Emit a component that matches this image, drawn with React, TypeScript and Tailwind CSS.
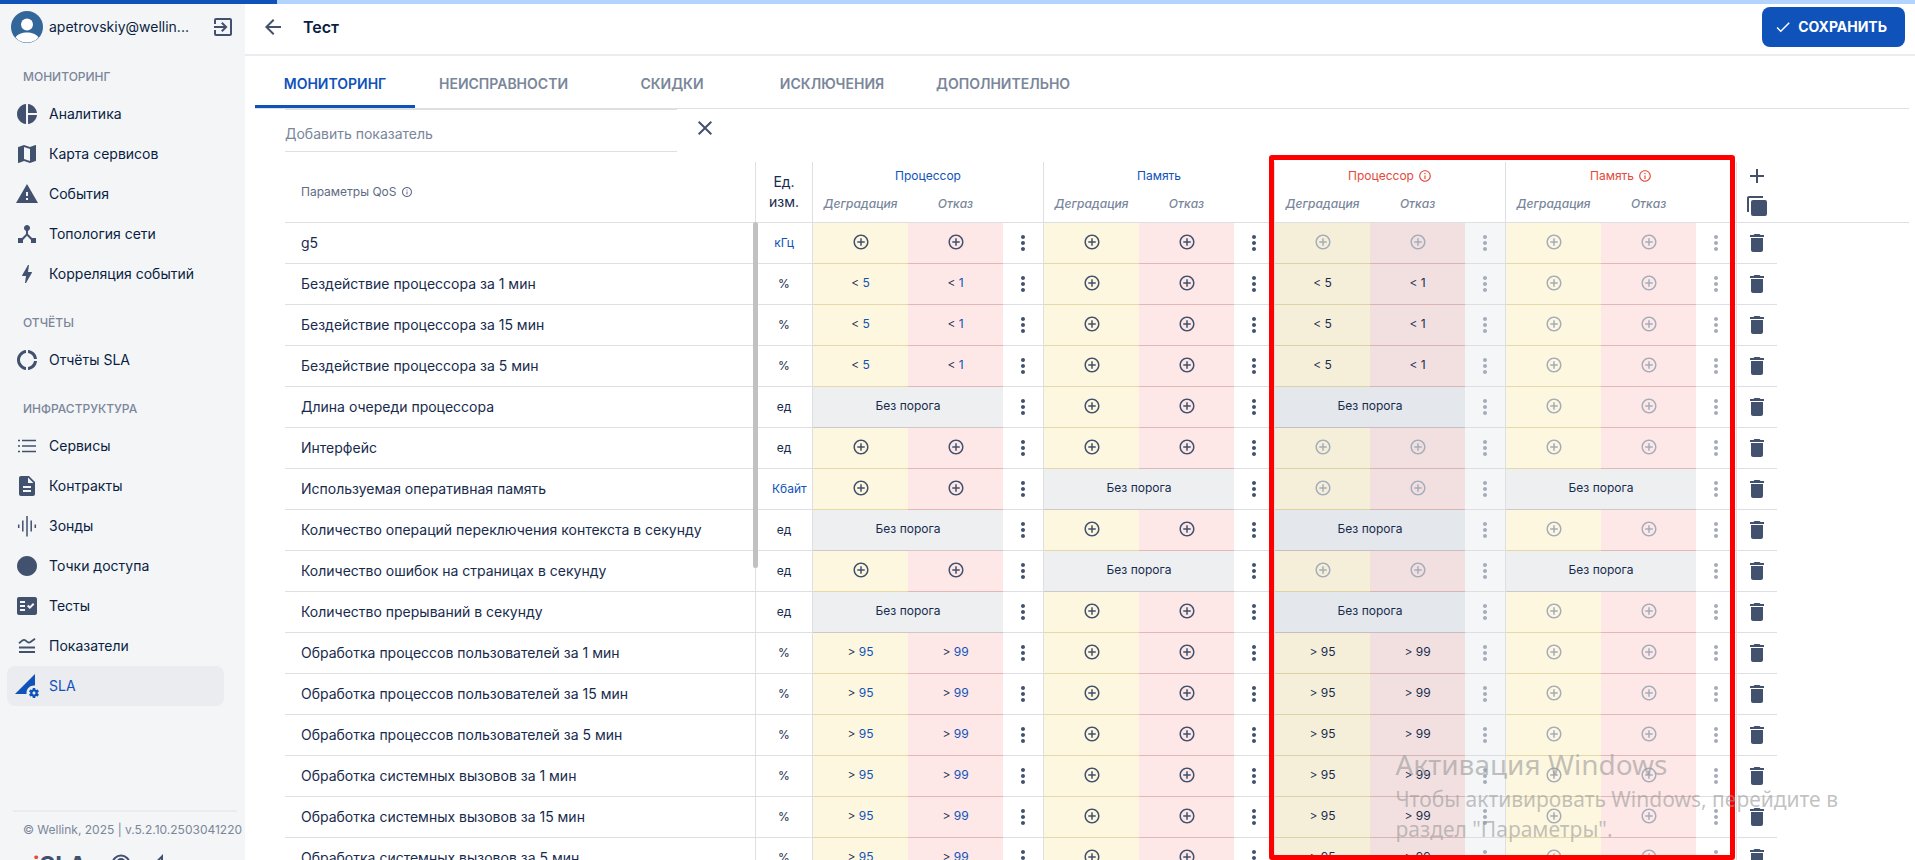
import React, { useState } from 'react'
import {
  MdAdd,
  MdAddCircleOutline,
  MdArrowBack,
  MdBolt,
  MdCheck,
  MdCircle,
  MdClose,
  MdDelete,
  MdDescription,
  MdDeviceHub,
  MdDonutLarge,
  MdExitToApp,
  MdFactCheck,
  MdInfoOutline,
  MdMap,
  MdMoreVert,
  MdPermDataSetting,
  MdPieChart,
  MdWarning,
} from 'react-icons/md'

interface IconProps {
  className?: string
}

const ListIcon: React.FC<IconProps> = ({ className }) => (
  <svg viewBox="0 0 24 24" fill="none" stroke="currentColor" strokeWidth="1.4" className={className}>
    <path d="M3 6.5h2M7 6.5h14M3 12h2M7 12h14M3 17.5h2M7 17.5h14" />
  </svg>
)

const ProbeIcon: React.FC<IconProps> = ({ className }) => (
  <svg viewBox="0 0 24 24" fill="none" stroke="currentColor" strokeWidth="1.5" className={className}>
    <path d="M3.7 10.5v3.5M7.8 6.5v11M12 2v20.5M16.2 6.5v11M20.3 10.5v3.5" />
  </svg>
)

const MetricsIcon: React.FC<IconProps> = ({ className }) => (
  <svg viewBox="0 0 24 24" fill="none" stroke="currentColor" strokeWidth="1.8" className={className}>
    <path d="M4 9.3l3.500-2.900q1.500-1.100 3 0l2 1.700q1.500 1.100 3 0L20 4.700M4 13.500h16M4 18h16" />
  </svg>
)

const CopyIcon: React.FC<IconProps> = ({ className }) => (
  <svg viewBox="0 0 24 24" fill="currentColor" className={className}>
    <path d="M4 18H2V4c0-1.1.9-2 2-2h14v2H4z" />
    <rect x="6" y="6" width="16" height="16" rx="2" />
  </svg>
)

const Avatar: React.FC<IconProps> = ({ className }) => (
  <svg viewBox="0 0 32 32" className={className}>
    <circle cx="16" cy="16" r="16" fill="#336699" />
    <circle cx="16" cy="13.500" r="6" fill="#fff" />
    <path d="M4.5 26.500C6.500 23.200 11 21.500 16 21.500s9.500 1.700 11.500 5A15.500 15.500 0 0 1 16 31.500a15.500 15.500 0 0 1-11.500-5z" fill="#fff" />
  </svg>
)

const MENU = [
  {
    title: 'МОНИТОРИНГ',
    items: [
      { icon: MdPieChart, label: 'Аналитика' },
      { icon: MdMap, label: 'Карта сервисов' },
      { icon: MdWarning, label: 'События' },
      { icon: MdDeviceHub, label: 'Топология сети' },
      { icon: MdBolt, label: 'Корреляция событий' },
    ],
  },
  {
    title: 'ОТЧЁТЫ',
    items: [{ icon: MdDonutLarge, label: 'Отчёты SLA' }],
  },
  {
    title: 'ИНФРАСТРУКТУРА',
    items: [
      { icon: ListIcon, label: 'Сервисы' },
      { icon: MdDescription, label: 'Контракты' },
      { icon: ProbeIcon, label: 'Зонды' },
      { icon: MdCircle, label: 'Точки доступа' },
      { icon: MdFactCheck, label: 'Тесты' },
      { icon: MetricsIcon, label: 'Показатели' },
      { icon: MdPermDataSetting, label: 'SLA' },
    ],
  },
]

const TABS = ['МОНИТОРИНГ', 'НЕИСПРАВНОСТИ', 'СКИДКИ', 'ИСКЛЮЧЕНИЯ', 'ДОПОЛНИТЕЛЬНО']

// null — порог не задан, 'none' — без порога
type Threshold = null | 'none' | [string, string]

interface Row {
  name: string
  unit: string
  cpu: Threshold
  memory: Threshold
}

const ROWS: Row[] = [
  { name: 'g5', unit: 'кГц', cpu: null, memory: null },
  { name: 'Бездействие процессора за 1 мин', unit: '%', cpu: ['< 5', '< 1'], memory: null },
  { name: 'Бездействие процессора за 15 мин', unit: '%', cpu: ['< 5', '< 1'], memory: null },
  { name: 'Бездействие процессора за 5 мин', unit: '%', cpu: ['< 5', '< 1'], memory: null },
  { name: 'Длина очереди процессора', unit: 'ед', cpu: 'none', memory: null },
  { name: 'Интерфейс', unit: 'ед', cpu: null, memory: null },
  { name: 'Используемая оперативная память', unit: 'Кбайт', cpu: null, memory: 'none' },
  { name: 'Количество операций переключения контекста в секунду', unit: 'ед', cpu: 'none', memory: null },
  { name: 'Количество ошибок на страницах в секунду', unit: 'ед', cpu: null, memory: 'none' },
  { name: 'Количество прерываний в секунду', unit: 'ед', cpu: 'none', memory: null },
  { name: 'Обработка процессов пользователей за 1 мин', unit: '%', cpu: ['> 95', '> 99'], memory: null },
  { name: 'Обработка процессов пользователей за 15 мин', unit: '%', cpu: ['> 95', '> 99'], memory: null },
  { name: 'Обработка процессов пользователей за 5 мин', unit: '%', cpu: ['> 95', '> 99'], memory: null },
  { name: 'Обработка системных вызовов за 1 мин', unit: '%', cpu: ['> 95', '> 99'], memory: null },
  { name: 'Обработка системных вызовов за 15 мин', unit: '%', cpu: ['> 95', '> 99'], memory: null },
  { name: 'Обработка системных вызовов за 5 мин', unit: '%', cpu: ['> 95', '> 99'], memory: null },
]

const GROUPS: { title: string; field: 'cpu' | 'memory'; locked: boolean; shaded: boolean }[] = [
  { title: 'Процессор', field: 'cpu', locked: false, shaded: false },
  { title: 'Память', field: 'memory', locked: false, shaded: false },
  { title: 'Процессор', field: 'cpu', locked: true, shaded: true },
  { title: 'Память', field: 'memory', locked: true, shaded: false },
]

const Sidebar: React.FC = () => (
  <aside className="flex w-[245px] shrink-0 flex-col bg-[#f4f5f7] pt-1">
    <div className="flex h-11 shrink-0 items-center pt-0.5 pl-[11px]">
      <Avatar className="h-8 w-8" />
      <span className="ml-1.5 w-[142px] truncate text-sm text-[#091e42]">apetrovskiy@wellin...</span>
      <button aria-label="Выйти" className="ml-5 cursor-pointer text-[#42526e]">
        <MdExitToApp className="h-6 w-6" />
      </button>
    </div>
    <nav>
      {MENU.map(section => (
        <div key={section.title}>
          <h3 className="flex h-[46px] items-center pt-3 pl-[23px] text-xs font-medium text-[#7a869a]">{section.title}</h3>
          {section.items.map(item => (
            <a
              key={item.label}
              href="#"
              className={`mr-[21px] ml-[7px] flex h-10 items-center gap-2.5 rounded-lg pl-2 text-sm ${
                item.label === 'SLA' ? 'bg-[#ebecf0] text-[#0f52ba]' : 'text-[#091e42]'
              }`}
            >
              <item.icon className={`h-6 w-6 ${item.label === 'SLA' ? '' : 'text-[#42526e]'}`} />
              {item.label}
            </a>
          ))}
        </div>
      ))}
    </nav>
    <footer className="mt-auto h-[50px] shrink-0 overflow-hidden">
      <div className="mr-2 ml-[13px] border-t-2 border-[#ebecf0] pt-2.5 pl-2.5">
        <p className="text-xs whitespace-nowrap text-[#7a869a]">© Wellink, 2025 | v.5.2.10.2503041220</p>
        <div className="mt-4 flex items-start gap-6 pl-2.5">
          <span className="text-2xl/6 font-bold text-[#42526e]">
            <span className="text-[#e5493a]">i</span>SLA
          </span>
          <svg viewBox="0 0 20 20" fill="none" stroke="currentColor" strokeWidth="2" className="h-5 w-5 text-[#42526e]">
            <circle cx="10" cy="10" r="8.500" />
            <circle cx="10" cy="8.500" r="3.500" />
          </svg>
          <svg viewBox="0 0 20 20" fill="none" stroke="currentColor" strokeWidth="2" className="h-5 w-5 text-[#42526e]">
            <path d="M7 2.500v15L2 13V7.500z" />
          </svg>
        </div>
      </div>
    </footer>
  </aside>
)

interface CellsProps {
  value: Threshold
  locked: boolean
  shaded: boolean
}

const ThresholdCells: React.FC<CellsProps> = ({ value, locked, shaded }) => {
  const iconColor = locked ? 'text-[#a5adba]' : 'text-[#42526e]'

  const renderValue = (text: string | null) => {
    if (text === null) {
      return (
        <button disabled={locked} aria-label="Добавить порог" className={`block mx-auto ${iconColor}`}>
          <MdAddCircleOutline className="h-[18px] w-[18px]" />
        </button>
      )
    }
    const [sign, num] = text.split(' ')
    return (
      <>
        {sign} <span className={locked ? '' : 'text-[#0f52ba]'}>{num}</span>
      </>
    )
  }

  return (
    <>
      {value === 'none' ? (
        <td
          colSpan={2}
          className={`border-b pb-0.5 text-center text-xs ${shaded ? 'border-[#c5bfc5] bg-[#e4e7eb]' : 'border-[#cfc8ca] bg-[#edeff1]'}`}
        >
          Без порога
        </td>
      ) : (
        <>
          <td
            className={`border-b pb-0.5 text-center text-xs ${shaded ? 'border-[#ddd1a6] bg-[#f5efda]' : 'border-[#e5d8aa] bg-[#fef7df]'}`}
          >
            {renderValue(value && value[0])}
          </td>
          <td
            className={`border-b pb-0.5 text-center text-xs ${shaded ? 'border-[#d8b4b5] bg-[#f2e0e1]' : 'border-[#e0b8b7] bg-[#fde8e7]'}`}
          >
            {renderValue(value && value[1])}
          </td>
        </>
      )}
      <td className={`border-r border-b border-[#dedfe2] ${shaded ? 'bg-[#f4f6f8]' : ''}`}>
        <button disabled={locked} aria-label="Действия" className={`block mx-auto ${iconColor}`}>
          <MdMoreVert className="h-6 w-6" />
        </button>
      </td>
    </>
  )
}

const QosTable: React.FC = () => (
  <table className="w-full table-fixed border-separate border-spacing-0 text-[#172b4d]">
    <colgroup>
      <col className="w-[471px]" />
      <col className="w-[57px]" />
      {GROUPS.map((g, i) => (
        <React.Fragment key={i}>
          <col className="w-[95px]" />
          <col className="w-[95px]" />
          <col className="w-[41px]" />
        </React.Fragment>
      ))}
      <col className="w-10" />
      <col />
    </colgroup>
    <thead>
      <tr className="h-[27px]">
        <th rowSpan={2} className="border-r border-b border-[#dedfe2] pl-4 text-left text-xs font-normal text-[#5e6c84]">
          <span className="flex items-center gap-1">
            Параметры QoS <MdInfoOutline className="h-3 w-3" />
          </span>
        </th>
        <th rowSpan={2} className="border-r border-b border-[#dedfe2] px-2 text-sm font-normal">
          Ед. изм.
        </th>
        {GROUPS.map((g, i) => (
          <th key={i} colSpan={3} className="border-r border-[#dedfe2] text-xs font-normal">
            {g.locked ? (
              <span className="flex items-center justify-center gap-1 text-[#e5493a]">
                {g.title} <MdInfoOutline className="h-3.5 w-3.5" />
              </span>
            ) : (
              <a href="#" className="text-[#0f52ba]">{g.title}</a>
            )}
          </th>
        ))}
        <th rowSpan={2} className="border-b border-[#dedfe2] pb-0.5 text-[#42526e]">
          <div className="flex flex-col items-center gap-1.5">
            <button aria-label="Добавить"><MdAdd className="h-6 w-6" /></button>
            <button aria-label="Копировать"><CopyIcon className="h-6 w-6" /></button>
          </div>
        </th>
        <th rowSpan={2} className="border-b border-[#dedfe2]" />
      </tr>
      <tr className="h-[34px] text-xs text-[#7a869a] italic">
        {GROUPS.map((g, i) => (
          <React.Fragment key={i}>
            <th className="border-b border-[#dedfe2] pb-1 font-medium">Деградация</th>
            <th className="border-b border-[#dedfe2] pb-1 font-medium">Отказ</th>
            <th className="border-r border-b border-[#dedfe2]" />
          </React.Fragment>
        ))}
      </tr>
    </thead>
    <tbody>
      {ROWS.map(row => (
        <tr key={row.name} className="h-[41px]">
          <td className="border-r border-b border-[#dedfe2] pl-4 text-sm">{row.name}</td>
          <td className={`border-r border-b border-[#dedfe2] px-4 text-center text-xs ${
            row.unit === 'кГц' || row.unit === 'Кбайт' ? 'text-[#0f52ba]' : ''
          }`}>
            {row.unit}
          </td>
          {GROUPS.map((g, i) => (
            <ThresholdCells key={i} value={row[g.field]} locked={g.locked} shaded={g.shaded} />
          ))}
          <td className="border-b border-[#dedfe2] text-[#42526e]">
            <button aria-label="Удалить" className="block mx-auto cursor-pointer">
              <MdDelete className="h-6 w-6" />
            </button>
          </td>
        </tr>
      ))}
    </tbody>
  </table>
)

const App: React.FC = () => {
  const [tab, setTab] = useState(TABS[0])
  const [query, setQuery] = useState('')

  return (
    <div className="relative flex h-screen overflow-hidden bg-white font-['Inter','Liberation_Sans',sans-serif]">
      {/* Loading bar */}
      <div className="absolute inset-x-0 top-0 h-1 bg-[#b3d4ff]">
        <div className="h-full w-[277px] bg-[#0f52ba]" />
      </div>

      <Sidebar />

      <main className="flex min-w-0 flex-1 flex-col pt-1">
        <header className="flex h-[52px] shrink-0 items-center border-b-2 border-[#ebecf0] pr-2.5 pb-1 pl-4">
          <button aria-label="Назад" className="cursor-pointer text-[#42526e]">
            <MdArrowBack className="h-6 w-6" />
          </button>
          <h1 className="ml-[18px] text-base font-semibold text-[#091e42]">Тест</h1>
          <button className="ml-auto flex h-10 cursor-pointer items-center gap-1.5 rounded-lg bg-[#0f52ba] pr-[18px] pl-3 text-sm font-bold text-white">
            <MdCheck className="h-[18px] w-[18px]" />
            СОХРАНИТЬ
          </button>
        </header>

        <div className="mr-1.5 ml-2.5 flex shrink-0 border-b border-[#dedfe2]">
          {TABS.map(t => (
            <button
              key={t}
              onClick={() => setTab(t)}
              className={`h-[52px] min-w-40 cursor-pointer border-b-3 px-6 pt-1.5 text-sm font-semibold ${
                t === tab ? 'border-[#0f52ba] text-[#0f52ba]' : 'border-transparent text-[#7a869a]'
              }`}
            >
              {t}
            </button>
          ))}
        </div>

        <div className="mr-1.5 ml-10 flex min-h-0 flex-1 flex-col">
          <div className="flex shrink-0 items-start">
            <input
              type="text"
              aria-label="Добавить показатель"
              placeholder="Добавить показатель"
              value={query}
              onChange={e => setQuery(e.target.value)}
              className="h-[43px] w-[392px] border-y border-[#dedfe2] pt-1.5 text-sm text-[#172b4d] outline-none placeholder:text-[#7a869a]"
            />
            <button aria-label="Очистить" onClick={() => setQuery('')} className="mt-[7px] ml-4 cursor-pointer text-[#42526e]">
              <MdClose className="h-6 w-6" />
            </button>
          </div>

          <div className="relative mt-2.5 min-h-0 flex-1">
            <div className="h-full overflow-hidden">
              <QosTable />
            </div>
            <div className="absolute top-[60px] left-[468px] h-[346px] w-[5px] rounded-full bg-[#c1c1c1]" />
            <div className="absolute -top-[7px] bottom-0 left-[984px] w-[466px] rounded-[3px] border-5 border-[#ff0000]" />
          </div>
        </div>
      </main>

      {/* Watermark */}
      <div className="pointer-events-none absolute right-[77px] bottom-4 font-['Noto_Sans','Open_Sans',sans-serif] text-[21px]/[30px] text-[#999999]/60">
        <p className="text-[28px]/10">Активация Windows</p>
        <p>
          Чтобы активировать Windows, перейдите в<br />
          раздел "Параметры".
        </p>
      </div>
    </div>
  )
}

export default App
